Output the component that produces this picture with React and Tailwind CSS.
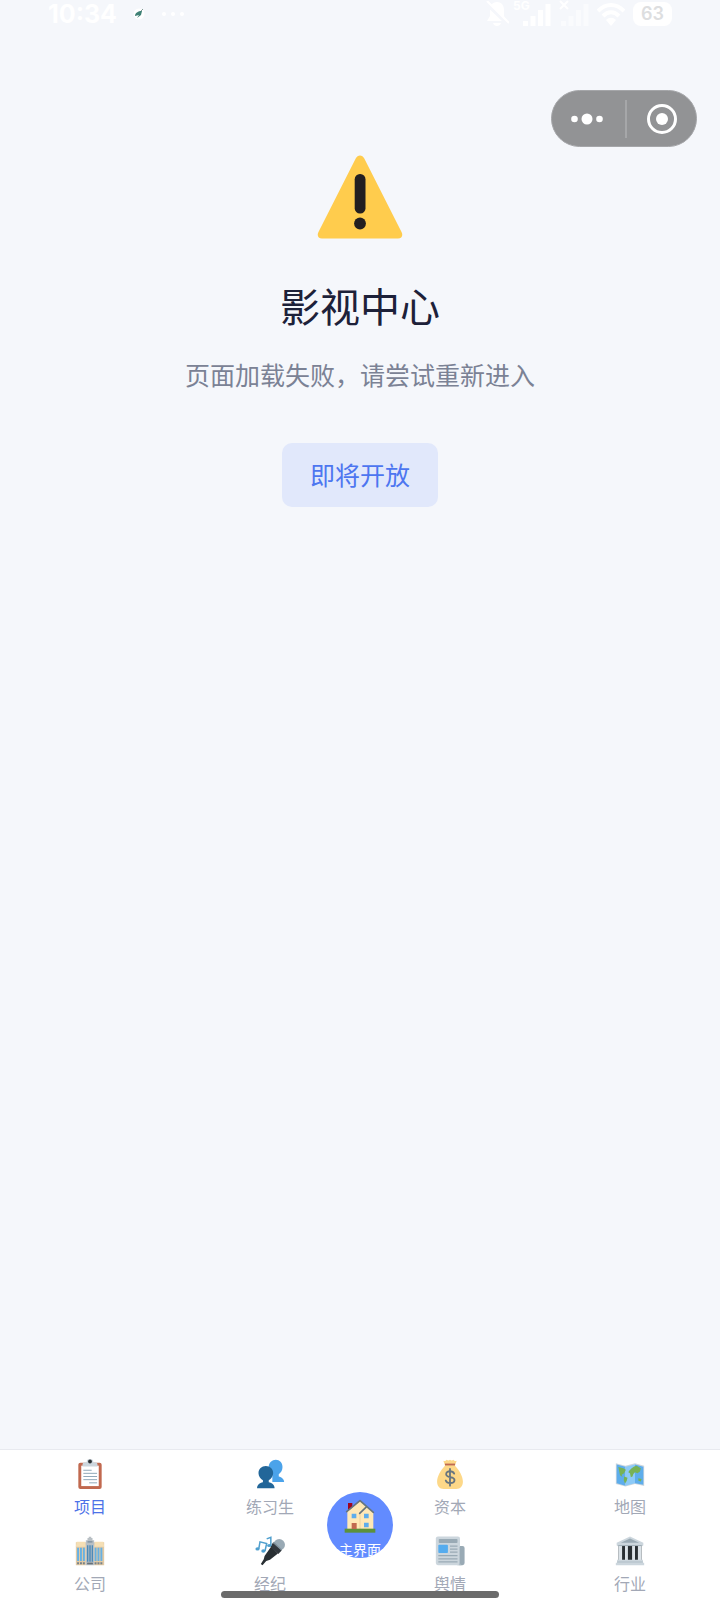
import React from "react";

function WarningIcon() {
  return (
    <svg viewBox="0 0 86 84" className="h-[84px] w-[86px]" aria-hidden="true">
      <path d="M5 83.5C1 83.5-.3 80.3 1.6 76.8L38.7 3.6c2-4.1 6.6-4.1 8.6 0l37.1 73.2c1.9 3.5.6 6.7-3.4 6.7z" fill="#ffcc4d" />
      <rect x="37.7" y="19" width="10.8" height="39.5" rx="5.2" fill="#231f20" />
      <circle cx="43" cy="68.5" r="5.9" fill="#231f20" />
    </svg>
  );
}

function Icon({ children }) {
  return (
    <svg viewBox="0 0 36 36" className="size-[30px]" aria-hidden="true">
      {children}
    </svg>
  );
}

function ClipboardIcon() {
  return (
    <Icon>
      <rect x="4" y="4.5" width="28" height="31.5" rx="2.5" fill="#c1694f" />
      <path d="M7.500 8h21v24.500h-21z" fill="#fff" />
      <path d="M24 4h-2a4 4 0 0 0-8 0h-2a3 3 0 0 0-3 3v2h18V7a3 3 0 0 0-3-3z" fill="#ccd6dd" />
      <circle cx="18" cy="3" r="2.3" fill="#292f33" />
      <path d="M10 13.5h10M10 17.2h16.500M10 21h16.500M10 24.800h16.500M17 28.600h9.500" stroke="#91a9b9" strokeWidth="1.2" />
    </Icon>
  );
}

function PeopleIcon() {
  return (
    <Icon>
      <path d="M35 27.500c0-3.500-3-5.500-6.500-6.500v-2.800c2.800-2 4.500-5 4.500-8.700C33 4.500 29.500 1 25 1s-8.500 3.500-8.500 8.500c0 3.700 1.600 6.700 4.300 8.700V27.500z" fill="#4ba3ea" />
      <path d="M23.500 35c0-4-3-6-7-7v-2.500c3-2 5.300-5 5.300-8.500 0-5-3.800-8.500-8.800-8.500S4.200 12 4.200 17c0 3.500 2.200 6.500 5.300 8.500V28c-4 1-7 3-7 7z" fill="#226699" />
    </Icon>
  );
}

function MoneyBagIcon() {
  return (
    <Icon>
      <path d="M12 8L10 2c1.500 1 3 .5 4-1 1.500 1 2.500 1 4 0 1.500 1 2.500 1 4 0 1 1.500 2.500 2 4 1l-2 6c5 5 9.500 13 9.500 19 0 5-2.500 9-8 9h-15c-5.500 0-8-4-8-9 0-6 4.500-14 9.500-19z" fill="#fdd888" />
      <path d="M12 5.500h12v2.200H12z" fill="#bf6952" />
      <path d="M23 17.500c-1-2-2.800-2.800-5-2.800-2.700 0-4.600 1.300-4.600 3.500 0 5 10 2 10 7 0 2.500-2.300 3.800-5.200 3.800-2.600 0-4.500-1-5.300-3.200M18 12v20" fill="none" stroke="#67757f" strokeWidth="2.2" strokeLinecap="round" />
    </Icon>
  );
}

function MapIcon() {
  return (
    <Icon>
      <path d="M1 5l11.500 3L24 5l11 3v24.500L24 30l-11.500 3L1 30z" fill="#ccd6dd" />
      <path d="M2 6.500l10.500 2.800V32L2 29z" fill="#5dadec" />
      <path d="M12.500 9.300L24 6.500V29l-11.500 3z" fill="#8ccaf7" />
      <path d="M24 6.500l10 2.800V31l-10-2z" fill="#5dadec" />
      <path d="M4 9.500l6 1.500 3 2-2 4-3 2 1 2.500-3-2-1-5zM11 21l4 1.500-1 4-2 3-1.500-4zM17 14l3-3 3-2 3-1 5 3-1 4-3 2-3-1-2 2-1 3-2 1-1-5-2-1zM28 23l4 1-1 3-3-1z" fill="#77b255" />
    </Icon>
  );
}

function CompanyIcon() {
  const sideWindows = [2.5, 6, 9.5, 23.5, 27, 30.5];
  return (
    <Icon>
      <path d="M1 7.500h12V35H1zM23 7.500h12V35H23z" fill="#e1c9a4" />
      <path d="M2 7h10l1 6H1zM24 7h10l1 6H23z" fill="#f5dfb5" />
      <path d="M13 5h2V2.500h1.500V1h3v1.500H21V5h2v30H13z" fill="#b8bfc4" />
      {sideWindows.map((x) => (
        <g key={x}>
          <path d={`M${x} 14h2.300v16h-2.300z`} fill="#67b1e3" />
          <path d={`M${x} 31.500h2.300v2.500h-2.300z`} fill="#76828a" />
        </g>
      ))}
      <path d="M14.500 11h1.500v20h-1.500zM17.200 11h1.600v20h-1.600zM20 11h1.500v20H20z" fill="#4286b8" />
      <path d="M14.500 32h7v2h-7z" fill="#66717a" />
      <path d="M15 6h6v2h-6z" fill="#8899a6" />
    </Icon>
  );
}

function MicIcon() {
  return (
    <Icon>
      <circle cx="29" cy="10.500" r="7" fill="#99aab5" />
      <path d="M19.500 12.500L27.500 21 18 28.500 13.500 30 9 35l-2-1.500 3.500-5.500 1-4z" fill="#292f33" />
      <path d="M21.500 8L32 17.500 28 21.500 18.500 12.500z" fill="#31373d" />
      <path d="M22 7.500l10 9.500" stroke="#7d8d98" strokeWidth="1.500" />
      <path d="M4.500 15.500L6 7l8 2-2 9M19 12V1.500L14 3.500" fill="none" stroke="#4f9fce" strokeWidth="1.800" />
      <ellipse cx="3" cy="15.500" rx="2.500" ry="2" fill="#4f9fce" />
      <ellipse cx="10" cy="18" rx="2.500" ry="2" fill="#4f9fce" />
      <ellipse cx="17" cy="11.500" rx="2.500" ry="1.800" fill="#4f9fce" />
    </Icon>
  );
}

function NewspaperIcon() {
  return (
    <Icon>
      <path d="M27 12h6a2.500 2.500 0 0 1 2.500 2.500v18A2.500 2.500 0 0 1 33 35h-6z" fill="#99aab5" />
      <rect x="1" y=".5" width="29" height="34.500" rx="2.500" fill="#ccd6dd" />
      <path d="M30 13v19c0 1.500.7 2.500 2 3h-3V13z" fill="#b2c0ca" />
      <rect x="4.500" y="3.500" width="22.500" height="5" rx="1" fill="#99aab5" />
      <rect x="4" y="10.500" width="11.500" height="10" rx="1" fill="#55acee" />
      <path d="M18 12h9M18 15.700h9M18 19.400h9M4 23.500h23M4 27.300h23M4 31h23" stroke="#99aab5" strokeWidth="1.500" />
    </Icon>
  );
}

function BankIcon() {
  return (
    <Icon>
      <path d="M4 11h28v19H4z" fill="#292f33" />
      <path d="M18 .5L34 8v3.500H2V8z" fill="#ccd6dd" />
      <path d="M18 3l11 5H7z" fill="#9aaab4" />
      <path d="M4 12h4.500v17H4zM12 12h3.500v17H12zM20.500 12H24v17h-3.500zM27.500 12H32v17h-4.500z" fill="#dce3e8" />
      <path d="M2.500 28.500h31V32H35v3H1v-3h1.500z" fill="#ccd6dd" />
      <path d="M2.500 31.200h31M3 11.500h30" stroke="#aab8c2" />
    </Icon>
  );
}

function HouseIcon() {
  return (
    <svg viewBox="0 0 96 102" className="h-[34px] w-8 shrink-0" aria-hidden="true">
      <path d="M12 12h13v22H12z" fill="#a0041e" />
      <path d="M10 38L48 6l20 17 20 16v52H10z" fill="#ffe8b6" />
      <path d="M48 44v46" stroke="#e3c894" strokeWidth="2" />
      <path d="M2 89h92v12H2z" fill="#5c913b" />
      <path d="M23 72h15v18H23z" fill="#c1694f" />
      <path d="M23 44h14v14H23zM60 44h14v14H60zM60 71h14v14H60z" fill="#5dadec" />
      <path d="M8 38L48 5l40 35M47 43l21-20" fill="none" stroke="#66757f" strokeWidth="5" strokeLinecap="round" strokeLinejoin="round" />
    </svg>
  );
}

const tabs = [
  { label: "项目", icon: ClipboardIcon, active: true },
  { label: "练习生", icon: PeopleIcon },
  { label: "资本", icon: MoneyBagIcon },
  { label: "地图", icon: MapIcon },
  { label: "公司", icon: CompanyIcon },
  { label: "经纪", icon: MicIcon },
  { label: "舆情", icon: NewspaperIcon },
  { label: "行业", icon: BankIcon },
];

function SignalBars({ className, children }) {
  return (
    <div className="relative h-6 w-7">
      <svg viewBox="0 0 28 24" className={className} aria-hidden="true">
        <path d="M0 19h5v5H0zM7.500 14h5v10h-5zM15 8h5v16h-5zM22.500 2h5v22h-5z" fill="currentColor" />
      </svg>
      {children}
    </div>
  );
}

function StatusBar() {
  return (
    <div className="flex h-7 items-center justify-between pr-12 pl-12 text-white">
      <div className="flex items-center">
        <span className="font-['Inter'] text-[25px] leading-7 font-bold">10:34</span>
        <svg viewBox="0 0 12 12" className="ml-4 size-3" aria-hidden="true">
          <circle cx="6" cy="6" r="5.500" fill="#fff" />
          <path d="M2 8c0-3 3-5 7-5L8 7 4 10l2-3z" fill="#3f8175" />
          <path d="M8 3l2-2" stroke="#829994" />
        </svg>
        <svg viewBox="0 0 24 6" className="ml-4 h-1.5 w-6" aria-hidden="true">
          <circle cx="3" cy="3" r="2" fill="#fff" />
          <circle cx="12" cy="3" r="2" fill="#fff" />
          <circle cx="21" cy="3" r="2" fill="#fff" />
        </svg>
      </div>
      <div className="flex items-center">
        <svg viewBox="0 0 24 26" className="mr-3.5 h-[26px] w-6" aria-hidden="true">
          <path d="M12 1c-5 0-7 4-7 8v6l-3 5h20l-3-5V9c0-4-2-8-7-8zM8 22h8c-1 4-7 4-8 0z" fill="#fff" />
          <path d="M0 1l23 22" stroke="#f5f7fb" strokeWidth="4" />
          <path d="M2 0l22 22" stroke="#fff" strokeWidth="2" />
        </svg>
        <SignalBars className="size-full">
          <span className="absolute -top-0.5 -left-2.5 font-['Inter'] text-xs leading-3 font-bold">5G</span>
        </SignalBars>
        <div className="w-2.5" />
        <SignalBars className="size-full text-white/50">
          <svg viewBox="0 0 10 10" className="absolute -top-0.5 -left-0.5 size-2.5" aria-hidden="true">
            <path d="M1 1l8 8M9 1L1 9" stroke="#fff" strokeWidth="2" />
          </svg>
        </SignalBars>
        <svg viewBox="0 0 28 24" className="ml-2 h-6 w-7" aria-hidden="true">
          <path d="M1 9c8-8 18-8 26 0M6 14c5-5 11-5 16 0" fill="none" stroke="#fff" strokeWidth="4" />
          <path d="M9 18c3-3 7-3 10 0l-5 6z" fill="#fff" />
        </svg>
        <span className="ml-2 rounded-lg bg-white px-2 font-['Inter'] text-lg leading-6 font-semibold text-[#dddee0]">63</span>
      </div>
    </div>
  );
}

function MiniProgramMenu() {
  return (
    <div className="mt-[62px] mr-[23px] flex h-[57px] w-[146px] items-center self-end rounded-full border border-[#a5a6a9] bg-[#929395]">
      <button type="button" aria-label="更多" className="flex h-full flex-1 items-center justify-center pr-1">
        <svg viewBox="0 0 32 12" className="h-3 w-8" aria-hidden="true">
          <circle cx="3.500" cy="6" r="3.300" fill="#fff" />
          <circle cx="16" cy="6" r="5.500" fill="#fff" />
          <circle cx="28.500" cy="6" r="3.300" fill="#fff" />
        </svg>
      </button>
      <div className="h-[38px] w-0.5 bg-[#a6a7a9]" />
      <button type="button" aria-label="关闭" className="flex h-full flex-1 items-center justify-center">
        <svg viewBox="0 0 30 30" className="size-[30px]" aria-hidden="true">
          <circle cx="15" cy="15" r="13.500" fill="none" stroke="#fff" strokeWidth="3" />
          <circle cx="15" cy="15" r="6" fill="#fff" />
        </svg>
      </button>
    </div>
  );
}

function TabBar() {
  return (
    <nav className="relative border-t border-[#e8eaef] bg-white pb-1">
      <div className="grid grid-cols-4 gap-y-2">
        {tabs.map(({ label, icon: TabIcon, active }) => (
          <button
            key={label}
            type="button"
            aria-current={active ? "page" : undefined}
            className={
              active
                ? "flex flex-col items-center gap-[5px] pt-[9px] pb-px text-[#4d72e8]"
                : "flex flex-col items-center gap-[5px] pt-[9px] pb-px text-[#a2a8b6]"
            }
          >
            <TabIcon />
            <span className="text-base leading-6">{label}</span>
          </button>
        ))}
      </div>
      <button
        type="button"
        className="absolute top-[42px] left-1/2 flex size-[66px] -translate-x-1/2 flex-col items-center gap-1.5 overflow-hidden rounded-full bg-[#628bff] pt-[7px] text-white"
      >
        <HouseIcon />
        <span className="text-sm leading-5 whitespace-nowrap">主界面</span>
      </button>
      <div className="absolute bottom-0.5 left-1/2 h-[7px] w-[278px] -translate-x-1/2 rounded-full bg-[#6b6b6b]" />
    </nav>
  );
}

export default function App() {
  return (
    <div className="flex min-h-screen flex-col bg-[#f5f7fb] font-['Noto_Sans_CJK_SC',sans-serif]">
      <StatusBar />
      <MiniProgramMenu />
      <main className="flex flex-1 flex-col items-center pt-2">
        <WarningIcon />
        <h1 className="mt-[38px] text-[40px] leading-[56px] text-[#1d2139]">影视中心</h1>
        <p className="mt-[21px] text-[25px] leading-10 text-[#7b8295]">页面加载失败，请尝试重新进入</p>
        <button type="button" className="mt-[49px] rounded-[10px] bg-[#e1e8fb] px-7 pt-[11px] pb-[13px] text-[25px] leading-10 text-[#4d76f0]">
          即将开放
        </button>
      </main>
      <TabBar />
    </div>
  );
}
